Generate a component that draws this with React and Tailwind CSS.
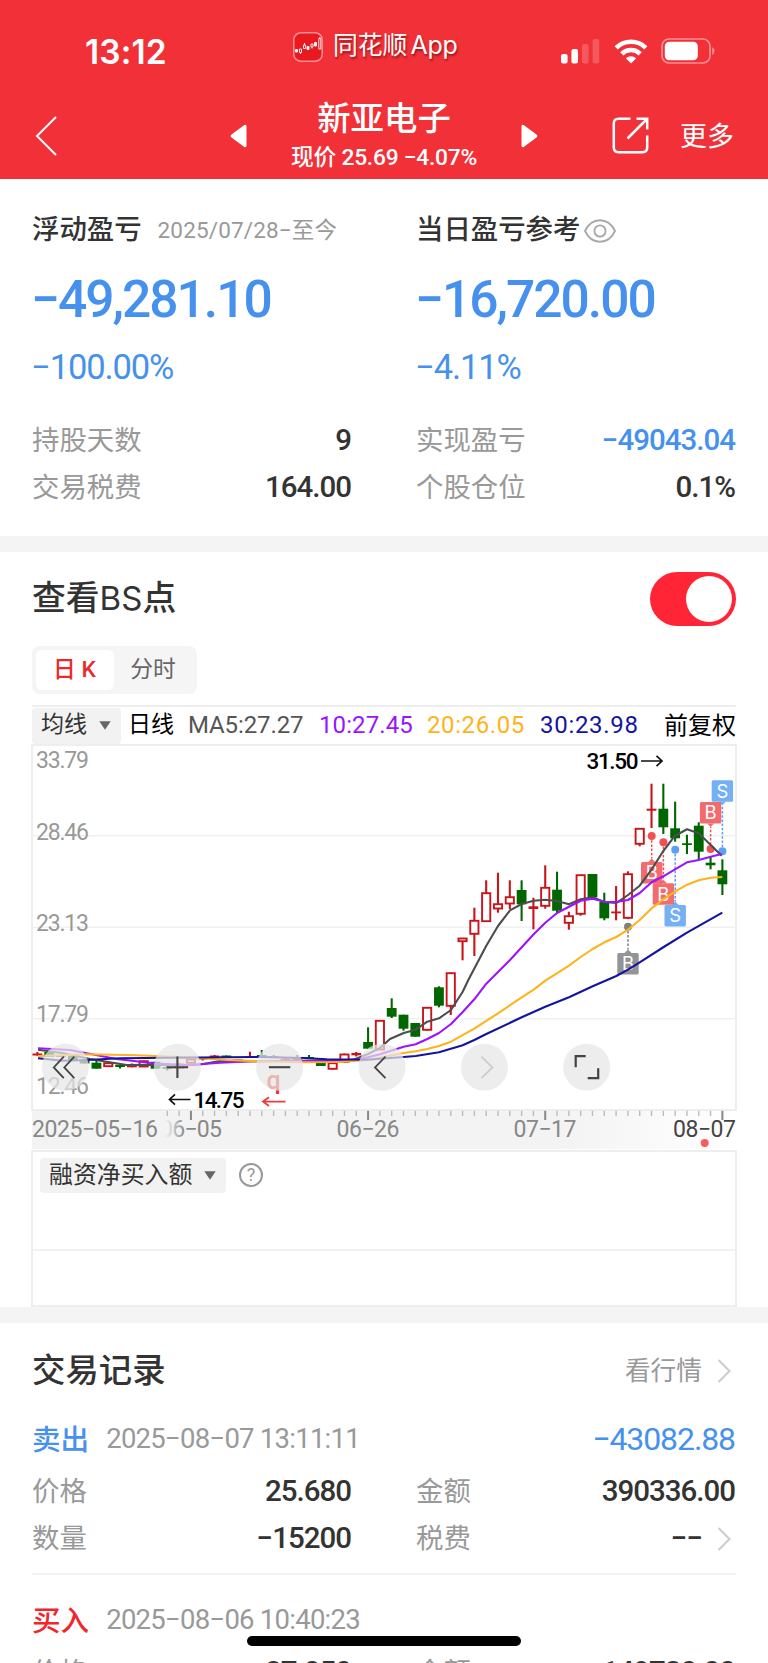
/**
 * Position detail page
 * Profit summary, K-line chart with B/S points and trade records
 */
import React, { useState } from 'react';

// Candles: [kind, bodyTop, bodyBottom, high, low]
// u = hollow up, r = solid up, d = down
const CANDLES = [
  ['r', 1053.5, 1055.5, 1052, 1055.5],
  ['d', 1052, 1057, 1052, 1057],
  ['r', 1055, 1057, 1055, 1057],
  ['d', 1056, 1060, 1056, 1060],
  ['d', 1060, 1063.5, 1060, 1063.5],
  ['d', 1062.7, 1068.7, 1061, 1068.7],
  ['u', 1062.7, 1066.7, 1062, 1067],
  ['d', 1064.7, 1067, 1064.7, 1068.5],
  ['r', 1064.7, 1067.3, 1063.5, 1067.3],
  ['u', 1060.7, 1067, 1060.7, 1067],
  ['d', 1061.7, 1068.7, 1061.7, 1068.7],
  ['d', 1067, 1069, 1066, 1070.5],
  ['u', 1064, 1068.3, 1063, 1069],
  ['u', 1059, 1063.3, 1059, 1063.3],
  ['r', 1058, 1059.5, 1057, 1060.5],
  ['r', 1055.5, 1057, 1055, 1057],
  ['d', 1055.5, 1058, 1055.5, 1058],
  ['d', 1059.5, 1062, 1059.5, 1062],
  ['r', 1056.5, 1058, 1051.7, 1058],
  ['d', 1055, 1058, 1050, 1058],
  ['r', 1056, 1058, 1055, 1058],
  ['r', 1059, 1060, 1058, 1060],
  ['r', 1057, 1061, 1055, 1063],
  ['d', 1057, 1058.5, 1055, 1058.5],
  ['d', 1063, 1066, 1063, 1066],
  ['u', 1062.7, 1069.3, 1062, 1069.5],
  ['u', 1054, 1062.3, 1053.5, 1063],
  ['r', 1053, 1055.3, 1052, 1056.5],
  ['d', 1042, 1048.7, 1027.3, 1049],
  ['u', 1020.3, 1050, 1020.3, 1050],
  ['d', 1008, 1016.7, 998.3, 1018],
  ['d', 1014.7, 1028.7, 1014.7, 1030.7],
  ['d', 1023, 1036.7, 1023, 1036.7],
  ['u', 1007.3, 1030.3, 1007.3, 1030.3],
  ['d', 987.3, 1005.7, 986.3, 1007.3],
  ['u', 972.7, 1006.3, 972.7, 1015],
  ['u', 938, 941.7, 938, 960.3],
  ['u', 920.3, 934.3, 907.7, 956],
  ['u', 892.7, 921.7, 880.3, 921.7],
  ['u', 903.7, 909, 872.7, 912.7],
  ['u', 896.7, 904, 880.3, 909],
  ['d', 890, 904.3, 880.3, 921],
  ['r', 906.3, 909, 897.7, 929.3],
  ['u', 887.3, 906.3, 865.3, 908.7],
  ['d', 889.7, 910.7, 871.7, 913],
  ['u', 915.7, 923.3, 911.7, 929.7],
  ['u', 874.7, 914.3, 874.7, 915.7],
  ['d', 874, 897.3, 874, 897.3],
  ['d', 902, 918.3, 892.7, 920.3],
  ['r', 911.5, 913.3, 886, 920.3],
  ['u', 873.7, 918.3, 871.3, 919],
  ['u', 828.3, 844.3, 828.3, 846.3],
  ['r', 808.7, 810.7, 783.7, 828],
  ['d', 808.7, 827.3, 783.7, 834],
  ['d', 828.3, 838.3, 801.7, 841.7],
  ['d', 843.3, 845, 834.7, 854],
  ['d', 825.7, 851.7, 822.3, 860],
  ['d', 862.7, 865.3, 856.7, 869.3],
  ['d', 870.3, 884.3, 859.3, 895],
];

const MA_LINES = [
  {
    color: '#4d4d4d',
    points:
      '38,1049.7 62,1053 90,1059 126.7,1065 153.3,1064.7 186.7,1065.3 201.7,1064.3 220,1061 253,1061.3 303,1060.7 353,1060 368,1054 380,1048 390,1039 403.7,1033 415.7,1029.7 427.3,1021.7 439,1018.3 451,1010 462.7,991.7 468.3,980 486.3,945.7 498,926 510,910.3 521.7,904 533.7,900.7 545.3,899.7 557,901 569,904.3 580.7,899.3 592.7,897.3 604.3,902 616.3,903 628,895 639.7,885.7 651.7,869.3 663.3,851 675,835.7 687,829.3 698.7,833.3 710.7,845 721.7,855.7',
  },
  {
    color: '#9b14ff',
    points:
      '38,1048.3 70,1050 86.7,1053.3 116.7,1059 153.3,1063.3 186.7,1065.3 220,1062.7 253,1061.3 286.7,1061 320,1061.3 360,1059.3 380,1054.3 403.7,1046.7 415.7,1044.3 427.3,1039 439,1033 451,1024 462.7,1012 474.3,999.3 486.3,983.7 510,960 521.7,947.3 533.7,934.3 545.3,922.7 557,913 569,906.7 580.7,900.7 592.7,898.7 604.3,901.7 616.3,902 628,900 639.7,893 651.7,882.3 663.3,876.3 675,869.3 687,862.3 698.7,860 710.7,856.7 721.7,854',
  },
  {
    color: '#ffb31a',
    points:
      '38,1056 86.7,1054.3 136.7,1055.3 186.7,1057.3 226.7,1060 260,1061.3 303.3,1062.3 340,1062 370,1059.7 403.7,1053 415.7,1051.3 427.3,1049 439,1046 451,1041.7 474.3,1028.7 498,1013.3 521.7,997.3 533.7,989.7 545.3,980.7 569,965.7 580.7,957 592.7,949 604.3,942.3 616.3,937 628,929.7 639.7,920 651.7,908.3 663.3,899.3 675,891.7 687,884.7 698.7,880.3 710.7,877.7 722.3,877',
  },
  {
    color: '#1414a0',
    points:
      '38,1058.3 63,1060.7 86.7,1060 120,1058.3 170,1057.7 260,1057 303.3,1058 326.7,1059.3 366.7,1059.7 403.7,1057 415.7,1056 439,1052.3 462.7,1045.3 474.3,1040 486.3,1034 521.7,1017.3 545.3,1006.7 569,997.3 592.7,986.3 616.3,976 628,969.7 639.7,962.3 663.7,947 687,932.7 722.3,912.7',
  },
];

// Trade markers, y is the top of the label box
const MARKERS = [
  { text: 'B', x: 628, y: 953, dot: 926.7, color: '#808080' },
  { text: 'B', x: 651.7, y: 862, dot: 836, color: '#f05054' },
  { text: 'B', x: 663.4, y: 883.3, dot: 842.3, color: '#f05054' },
  { text: 'S', x: 675.2, y: 905, dot: 849.7, color: '#5ba0f2' },
  { text: 'B', x: 710.6, y: 802, dot: 849, color: '#f05054' },
  { text: 'S', x: 722.4, y: 780.3, dot: 851.3, color: '#5ba0f2' },
];

const PRICE_LABELS = [
  ['33.79', 767.5],
  ['28.46', 839.8],
  ['23.13', 931],
  ['17.79', 1022],
  ['12.46', 1093.5],
];

const UP = '#c8141a';
const DOWN = '#006600';

const candleX = (i) => 37.4 + i * 11.81;

const Candle = ({ data, index }) => {
  const [kind, top, bottom, high, low] = data;
  const x = candleX(index);
  const color = kind === 'd' ? DOWN : UP;
  return (
    <g>
      <line x1={x} x2={x} y1={high} y2={low} stroke={color} strokeWidth="2.1" />
      {kind === 'u' ? (
        <rect x={x - 4.1} y={top + 0.5} width="8.2" height={Math.max(bottom - top - 1, 2)} fill="#fff" stroke={color} strokeWidth="1.9" />
      ) : (
        <rect x={x - 4.9} y={top} width="9.8" height={bottom - top} fill={color} />
      )}
    </g>
  );
};

const Marker = ({ text, x, y, dot, color }) => {
  const below = y > dot;
  const edge = below ? y : y + 21.5;
  const tip = below ? y - 3.5 : y + 25;
  return (
    <g>
      <line x1={x} x2={x} y1={dot} y2={tip} stroke={color} strokeWidth="1.5" strokeDasharray="2.5 1.7" />
      <circle cx={x} cy={dot} r="4" fill={color} />
      <g opacity="0.84">
        <rect x={x - 10.7} y={y} width="21.4" height="21.5" rx="1.5" fill={color} />
        <path d={`M${x - 3.5} ${edge}L${x} ${tip}L${x + 3.5} ${edge}Z`} fill={color} />
      </g>
      <text x={x} y={y + 17.4} textAnchor="middle" fontSize="18.5" fill="#fff" className="font-['Inter',sans-serif]">
        {text}
      </text>
    </g>
  );
};

// Round tool button floating over the chart
const ToolButton = ({ x, muted, width = 1.8, d }) => (
  <g>
    <circle cx={x} cy="1067.2" r="23.5" fill="#e6e6e6" fillOpacity="0.72" />
    <path d={d} transform={`translate(${x} 1067.2)`} fill="none" stroke={muted ? '#ccc' : '#444'} strokeWidth={width} />
  </g>
);

const KLineChart = () => (
  <svg viewBox="32 744 704 406" className="block h-[406px] w-[704px] overflow-visible font-['Roboto','Noto_Sans_CJK_SC',sans-serif]">
    <defs>
      <linearGradient id="axis" x1="0" x2="1" y1="0" y2="0">
        <stop offset="0" stopColor="#f3f3f3" />
        <stop offset="0.75" stopColor="#f3f3f3" />
        <stop offset="1" stopColor="#fff" />
      </linearGradient>
      <linearGradient id="dateFade" x1="0" x2="1" y1="0" y2="0">
        <stop offset="0" stopColor="#f3f3f3" />
        <stop offset="0.87" stopColor="#f3f3f3" />
        <stop offset="1" stopColor="#f3f3f3" stopOpacity="0" />
      </linearGradient>
    </defs>

    <rect x="32" y="1110" width="704" height="39" fill="url(#axis)" />
    <rect x="32" y="745" width="704" height="365" fill="none" stroke="#ededed" strokeWidth="1.8" />
    {[835.8, 927.3, 1018.7].map((y) => (
      <line key={y} x1="32" x2="736" y1={y} y2={y} stroke="#f1f1f1" strokeWidth="1.6" />
    ))}

    {PRICE_LABELS.map(([label, y]) => (
      <text key={label} x="36" y={y} fontSize="23" textLength="53" fill="#999">{label}</text>
    ))}

    {CANDLES.map((data, i) => (
      <Candle key={i} data={data} index={i} />
    ))}
    {MARKERS.map((m) => (
      <Marker key={`${m.text}${m.x}`} {...m} />
    ))}
    {MA_LINES.map((line) => (
      <polyline key={line.color} points={line.points} fill="none" stroke={line.color} strokeWidth="2.1" strokeLinejoin="round" />
    ))}

    {/* Highest and lowest price */}
    <text x="586.5" y="769" fontSize="22.5" fontWeight="500" textLength="52" fill="#000">31.50</text>
    <path d="M641 761H662M656.5 755.8L662 761L656.5 766.2" fill="none" stroke="#111" strokeWidth="1.7" />
    <text x="193.5" y="1107.8" fontSize="22.5" fontWeight="500" textLength="51" fill="#000">14.75</text>
    <path d="M190.5 1099.5H169.5M175 1094.3L169.5 1099.5L175 1104.7" fill="none" stroke="#111" strokeWidth="1.7" />

    <text x="266.5" y="1089" fontSize="25" fontWeight="500" fill="#ef2b30">q</text>
    <path d="M285.5 1101.6H263M269 1097.3L263 1101.6L269 1105.9" fill="none" stroke="#ef3b40" strokeWidth="1.8" />

    <ToolButton x={65.3} d="M-1.5 -10.5L-11.5 0.2L-1.5 10.9M9 -10.5L-1 0.2L9 10.9" />
    <ToolButton x={177.4} width={2.1} d="M-10.7 0H10.7M0 -10.7V10.7" />
    <ToolButton x={279.6} width={2.1} d="M-10.7 0H10.7" />
    <ToolButton x={382} d="M3.5 -10.5L-7 0.2L3.5 10.9" />
    <ToolButton x={484.4} muted d="M-3 -10.5L8 0.2L-3 10.9" />
    <ToolButton x={586.7} width={2.2} d="M-11 0V-11H-1M11.5 1V11H1" />

    {/* Date axis */}
    {CANDLES.map((_, i) => {
      if (i < 11) return null;
      const major = i % 15 === 13;
      return (
        <line
          key={i}
          x1={candleX(i)}
          x2={candleX(i)}
          y1="1110.8"
          y2={major ? 1120 : 1116}
          stroke={major ? '#888' : '#bbb'}
          strokeWidth={major ? 2 : 1.4}
        />
      );
    })}
    <g fontSize="23" fill="#888">
      <text x="160" y="1137.3" textLength="62">06−05</text>
      <rect x="33" y="1118" width="152" height="28" fill="url(#dateFade)" />
      <text x="32" y="1137.3" textLength="126">2025−05−16</text>
      <text x="336.5" y="1137.3" textLength="63">06−26</text>
      <text x="513.5" y="1137.3" textLength="63">07−17</text>
      <text x="673" y="1137.3" textLength="63" fill="#444">08−07</text>
    </g>
    <circle cx="704.7" cy="1143" r="4" fill="#f75c5f" />
  </svg>
);

const StatusBar = () => (
  <div className="flex h-[92px] items-start justify-between pl-[85px] pr-[52px] pt-[26px]">
    <span className="w-[202px] pt-[8px] font-['Inter',sans-serif] text-[33.5px] font-semibold leading-[36px] tracking-[0.1px]">13:12</span>
    <div className="flex flex-1 items-center gap-[10px] pl-[6px]">
      <svg width="30" height="30" viewBox="0 0 30 30" className="mt-[3px]">
        <rect x="0.8" y="0.8" width="28.4" height="28.4" rx="7" fill="#e8191f" stroke="#f98f90" strokeWidth="1.5" />
        <g fill="#fff" stroke="#fff" strokeWidth="0.9">
          <path d="M2.5 17.5h2v2.5h-2zM14 14.5h2v3h-2zM21.5 10.5h2v3.5h-2z" />
          <path d="M6.5 17h2v3.5h-2zM7.5 20.5v1.5M10.5 13h2v3.5h-2zM11.5 13v-2M18 12h2v3h-2zM19 15v1.5M25.8 6.5h2v10.5h-2zM26.8 5v1.5" fill="none" />
        </g>
      </svg>
      <span className="flex items-baseline gap-[3px] text-[24.8px] leading-[38px] [text-shadow:1px_2px_2px_rgba(90,0,0,0.55)]">
        同花顺 <span className="font-['Inter',sans-serif] text-[25px] tracking-[-0.2px]">App</span>
      </span>
    </div>
    <div className="flex items-center pt-[12px]">
      <svg width="39" height="25" viewBox="0 0 39 25" fill="#fff">
        <rect x="0" y="15" width="6.6" height="9.5" rx="2" />
        <rect x="10.4" y="10" width="6.6" height="14.5" rx="2" />
        <rect x="21" y="5" width="6.6" height="19.5" rx="2" opacity="0.2" />
        <rect x="31.6" y="0" width="6.6" height="24.5" rx="2" opacity="0.2" />
      </svg>
      <svg width="34" height="25" viewBox="0 0 34 25" className="ml-[14px]" fill="none" stroke="#fff" strokeWidth="4.6">
        <path d="M2.2 8.8C10.2 0.8 23.8 0.8 31.8 8.8" />
        <path d="M7.8 14.8C13 9.8 21 9.8 26.2 14.8" />
        <path d="M17 24.5L11.8 19.2C14.8 16.5 19.2 16.5 22.2 19.2Z" fill="#fff" stroke="none" />
      </svg>
      <svg width="55" height="26" viewBox="0 0 55 26" className="ml-[13px]">
        <rect x="1" y="1" width="48" height="24" rx="7" fill="none" stroke="#f98f90" strokeWidth="1.7" />
        <rect x="3.8" y="3.8" width="33" height="18.4" rx="4.5" fill="#fff" />
        <path d="M51.2 9.2C54.2 10.5 54.2 15.5 51.2 16.8Z" fill="#f98f90" />
      </svg>
    </div>
  </div>
);

const Header = () => (
  <header className="h-[179px] bg-[#f13038] text-white">
    <StatusBar />
    <div className="flex h-[87px] items-center pl-[35px] pr-[34px]">
      <svg width="22" height="40" viewBox="0 0 22 40" fill="none" stroke="#fff" strokeWidth="2">
        <path d="M21 1L2 20L21 39" />
      </svg>
      <svg width="17" height="24" viewBox="0 0 17 24" className="ml-[173px]" fill="#fff">
        <path d="M14 1.3C15.3 0.3 16.5 0.8 16.5 2.5V21.5C16.5 23.2 15.3 23.7 14 22.7L1.5 13.5C0.4 12.6 0.4 11.4 1.5 10.5Z" />
      </svg>
      <div className="flex w-[274px] flex-col items-center pt-[2px]">
        <h1 className="text-[33.4px] font-medium leading-[42px]">新亚电子</h1>
        <p className="whitespace-nowrap pt-[1px] text-[22.8px] font-medium leading-[34px] tracking-[-0.25px]">现价 25.69 −4.07%</p>
      </div>
      <svg width="17" height="24" viewBox="0 0 17 24" fill="#fff">
        <path d="M3 1.3C1.7 0.3 0.5 0.8 0.5 2.5V21.5C0.5 23.2 1.7 23.7 3 22.7L15.5 13.5C16.6 12.6 16.6 11.4 15.5 10.5Z" />
      </svg>
      <svg width="37" height="37" viewBox="0 0 37 37" className="ml-[74px]" fill="none" stroke="#fff" strokeWidth="2.5">
        <path d="M18.5 1.8H6.5Q1.8 1.8 1.8 6.5V30.5Q1.8 35.2 6.5 35.2H30.5Q35.2 35.2 35.2 30.5V18.5" />
        <path d="M24.5 1.8H35.2V12.5M35 2L15.5 21.5" />
      </svg>
      <span className="ml-auto pt-[2px] text-[27px] leading-[40px]">更多</span>
    </div>
  </header>
);

const EyeIcon = () => (
  <svg width="32" height="24" viewBox="0 0 32 24" fill="none" stroke="#aaa" strokeWidth="1.9">
    <path d="M1 12C4.5 4.5 10 1.2 16 1.2S27.5 4.5 31 12C27.5 19.5 22 22.8 16 22.8S4.5 19.5 1 12Z" />
    <circle cx="16" cy="12" r="5.6" />
  </svg>
);

const ChevronRight = () => (
  <svg width="14" height="24" viewBox="0 0 14 24" fill="none" stroke="#ccc" strokeWidth="2">
    <path d="M1.5 1L12.5 12L1.5 23" />
  </svg>
);

const Caret = () => (
  <svg width="12" height="9" viewBox="0 0 12 9" fill="#666">
    <path d="M0.3 0.3H11.7L6 8.7Z" />
  </svg>
);

const Row = ({ label, value, valueClass = 'text-[#333] font-medium', arrow = false }) => (
  <div className="flex h-[47px] items-center justify-between">
    <span className="pt-[2px] text-[27.4px] text-[#999]">{label}</span>
    <span className={`flex items-center pr-[1px] text-[29.5px] tracking-[-1px] ${valueClass}`}>
      {value}
      {arrow && <span className="ml-[15px] mr-[4px]"><ChevronRight /></span>}
    </span>
  </div>
);

const Summary = () => (
  <section className="grid h-[357px] grid-cols-2 gap-x-16 px-8 pt-[32px]">
    <div>
      <div className="flex h-[40px] items-center whitespace-nowrap">
        <span className="text-[27.4px] font-medium">浮动盈亏</span>
        <span className="ml-[16px] text-[22.5px] tracking-[0.15px] text-[#999]">2025/07/28−至今</span>
      </div>
      <p className="-ml-[1px] mt-[14px] h-[70px] text-[51.5px] font-medium leading-[70px] tracking-[-2px] text-[#4691ee]">−49,281.10</p>
      <p className="-ml-[1px] mt-[9px] h-[46px] text-[34.5px] leading-[46px] tracking-[-1.1px] text-[#4691ee]">−100.00%</p>
      <div className="mt-[27px]">
        <Row label="持股天数" value="9" />
        <Row label="交易税费" value="164.00" />
      </div>
    </div>
    <div>
      <div className="flex h-[40px] items-center whitespace-nowrap">
        <span className="text-[27.4px] font-medium">当日盈亏参考</span>
        <span className="ml-[4px]"><EyeIcon /></span>
      </div>
      <p className="-ml-[1px] mt-[14px] h-[70px] text-[51.5px] font-medium leading-[70px] tracking-[-2px] text-[#4691ee]">−16,720.00</p>
      <p className="-ml-[1px] mt-[9px] h-[46px] text-[34.5px] leading-[46px] tracking-[-1.1px] text-[#4691ee]">−4.11%</p>
      <div className="mt-[27px]">
        <Row label="实现盈亏" value="−49043.04" valueClass="text-[#4691ee] font-medium" />
        <Row label="个股仓位" value="0.1%" />
      </div>
    </div>
  </section>
);

const ChartSection = () => {
  const [showPoints, setShowPoints] = useState(true);

  return (
    <section className="h-[755px] px-8 pt-[20px]">
      <div className="flex h-[54px] items-center justify-between">
        <h2 className="pt-[1px] text-[33.8px] font-medium">
          查看<span className="font-['Inter',sans-serif] text-[33px] font-normal tracking-[0.1px]">BS</span>点
        </h2>
        <button
          onClick={() => setShowPoints(!showPoints)}
          className={`flex h-[54px] w-[86px] items-center rounded-full px-[4px] ${showPoints ? 'justify-end bg-[#ff2536]' : 'justify-start bg-gray-300'}`}
        >
          <span className="size-[46px] rounded-full bg-white" />
        </button>
      </div>

      <div className="mt-[20px] flex h-[48px] w-[165px] rounded-[8px] bg-[#f5f5f5] p-[4px] text-[22.8px] leading-[40px]">
        <span className="w-[78px] rounded-[6px] bg-white pr-[1px] text-center font-medium text-[#eb2a2e]">日 K</span>
        <span className="flex-1 pr-[1px] text-center text-[#666]">分时</span>
      </div>

      {/* Moving average legend */}
      <div className="mt-[11px] flex h-[39px] items-center whitespace-nowrap border-t-2 border-[#eee] text-[24px]">
        <span className="flex h-[36px] w-[89px] items-center gap-[12px] rounded-[4px] bg-[#f2f2f2] pl-[9px] text-[#333]">
          <span className="text-[23px]">均线</span>
          <Caret />
        </span>
        <span className="ml-[7px] w-[60px] text-[23px] text-black">日线</span>
        <span className="w-[131px] pb-[2px] tracking-[-0.1px] text-[#555]">MA5:27.27</span>
        <span className="w-[108px] pb-[2px] tracking-[0.1px] text-[#9b14ff]">10:27.45</span>
        <span className="w-[113px] pb-[2px] tracking-[0.6px] text-[#ffb31a]">20:26.05</span>
        <span className="pb-[2px] tracking-[0.7px] text-[#1414a0]">30:23.98</span>
        <span className="ml-auto text-[24px] text-black">前复权</span>
      </div>

      <KLineChart />

      <div className="-mx-[1px] h-[157px] border-2 border-[#eee]">
        <div className="flex h-[99px] items-start gap-[13px] border-b-2 border-[#f1f1f1] pl-[7px] pt-[6px]">
          <span className="flex h-[35px] w-[186px] items-center gap-[12px] rounded-[4px] bg-[#f2f2f2] pl-[9px] text-[23.9px] text-[#333]">
            融资净买入额
            <Caret />
          </span>
          <span className="mt-[5px] flex size-[24px] items-center justify-center rounded-full border-2 border-[#999] text-[18px] leading-none text-[#999]">?</span>
        </div>
      </div>
    </section>
  );
};

const Trade = ({ type, typeClass, time, amount, rows }) => (
  <div>
    <div className="flex h-[55px] items-start leading-[52px]">
      <span className={`pt-[1px] text-[28.6px] font-medium ${typeClass}`}>{type}</span>
      <span className="ml-[17px] text-[27.5px] tracking-[-0.75px] text-[#999]">{time}</span>
      <span className="ml-auto pr-[1px] text-[32px] tracking-[-1.1px] text-[#4691ee]">{amount}</span>
    </div>
    <div className="grid grid-cols-2 gap-x-16">
      {rows.map((row) => (
        <Row key={row.label} {...row} />
      ))}
    </div>
  </div>
);

const TradeRecords = () => (
  <section className="px-8 pt-[21px]">
    <div className="flex h-[54px] items-center justify-between">
      <h2 className="text-[33.4px] font-medium">交易记录</h2>
      <span className="flex items-center gap-[15px] pr-[5px] text-[25.7px] text-[#999]">
        看行情
        <ChevronRight />
      </span>
    </div>

    <div className="mt-[15px] h-[162px] border-b-2 border-[#f4f4f4]">
      <Trade
        type="卖出"
        typeClass="text-[#4691ee]"
        time="2025−08−07 13:11:11"
        amount="−43082.88"
        rows={[
          { label: '价格', value: '25.680' },
          { label: '金额', value: '390336.00' },
          { label: '数量', value: '−15200' },
          { label: '税费', value: '−−', arrow: true },
        ]}
      />
    </div>
    <div className="pt-[19px]">
      <Trade
        type="买入"
        typeClass="text-[#f1262c]"
        time="2025−08−06 10:40:23"
        amount=""
        rows={[
          { label: '价格', value: '27.050' },
          { label: '金额', value: '149730.00' },
        ]}
      />
    </div>
  </section>
);

const App = () => (
  <div className="relative h-[1663px] w-[768px] overflow-hidden bg-white font-['Roboto','Noto_Sans_CJK_SC',sans-serif] text-[#333]">
    <Header />
    <Summary />
    <div className="h-[16px] bg-[#f4f4f4]" />
    <ChartSection />
    <div className="h-[16px] bg-[#f4f4f4]" />
    <TradeRecords />
    {/* Home indicator */}
    <div className="absolute bottom-[17px] left-[247px] h-[10px] w-[274px] rounded-full bg-black" />
  </div>
);

export default App;
